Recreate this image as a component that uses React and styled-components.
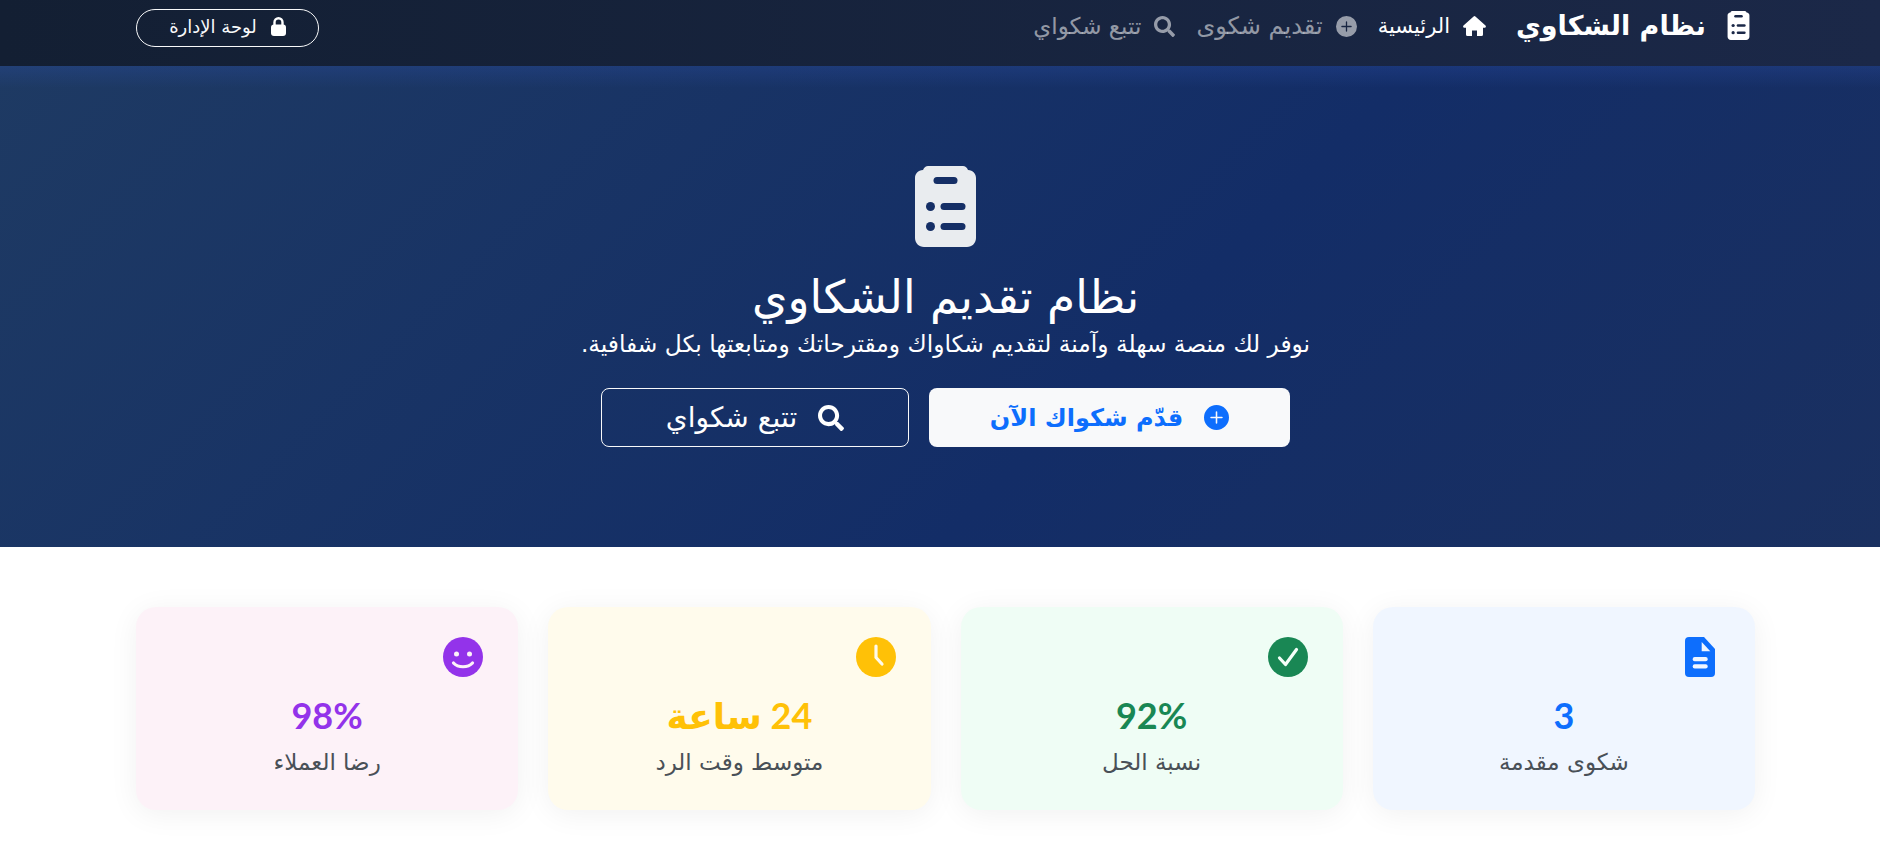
import React from "react";
import styled, { createGlobalStyle } from "styled-components";
import { FaSearch } from "react-icons/fa";
import { BsPlusCircleFill } from "react-icons/bs";

const GlobalStyle = createGlobalStyle`
  html, body { margin: 0; padding: 0; background: #fff; overflow: hidden; }
  body { font-family: "DejaVu Sans", sans-serif; }
`;

const Page = styled.div`
  direction: rtl;
  height: 853px;
  overflow: hidden;
  color: #212529;
`;

const Header = styled.header`
  height: 66px;
  box-sizing: border-box;
  padding: 9px 130px 19px 136px;
  display: flex;
  align-items: center;
  background: linear-gradient(90deg, #131f33, #1b2848);
`;

const Brand = styled.div`
  display: flex;
  align-items: center;
  gap: 21px;
  margin: 0 0 6px 30px;
  color: #fff;
  font-weight: 700;
  font-size: 27px;
`;

const Nav = styled.nav`
  display: flex;
  align-items: center;
  flex: 1;
  gap: 21px;
  margin-bottom: 4px;
`;

const NavLink = styled.a`
  display: flex;
  align-items: center;
  gap: 13px;
  font-size: ${(p) => p.$size}px;
  color: ${(p) => (p.$active ? "#fff" : "rgba(255,255,255,.55)")};
`;

const AdminButton = styled.a`
  display: flex;
  align-items: center;
  justify-content: center;
  gap: 14px;
  width: 183px;
  height: 38px;
  box-sizing: border-box;
  padding-bottom: 4px;
  border: 1px solid #f8f9fa;
  border-radius: 19px;
  font-size: 18px;
  color: #f8f9fa;
`;

const Hero = styled.section`
  height: 481px;
  box-sizing: border-box;
  padding: 100px 0 0 11px;
  display: flex;
  flex-direction: column;
  align-items: center;
  color: #fff;
  background:
    linear-gradient(180deg, rgba(45, 80, 170, 0.28), rgba(45, 80, 170, 0) 22px),
    linear-gradient(135deg, #1e3a63 0%, #132d67 60%, #1a3060 100%);
`;

const Title = styled.h1`
  margin: 26px 0 0;
  font-size: 45.5px;
  line-height: 50px;
  font-weight: 500;
`;

const Lead = styled.p`
  margin: 6px 0 29px;
  font-size: 23.3px;
  line-height: 30px;
`;

const Actions = styled.div`
  display: flex;
  gap: 20px;
`;

const HeroButton = styled.a`
  display: flex;
  align-items: center;
  justify-content: center;
  gap: 21px;
  height: 59px;
  width: ${(p) => (p.$solid ? "361px" : "308px")};
  box-sizing: border-box;
  border-radius: 8px;
  font-size: ${(p) => (p.$solid ? "24px" : "28px")};
  font-weight: ${(p) => (p.$solid ? 700 : 400)};
  color: ${(p) => (p.$solid ? "#0d6efd" : "#fff")};
  background: ${(p) => (p.$solid ? "#f8f9fa" : "transparent")};
  border: ${(p) => (p.$solid ? "none" : "1px solid #f8f9fa")};
`;

const Stats = styled.section`
  display: grid;
  grid-template-columns: repeat(4, 1fr);
  gap: 30px;
  padding: 60px 125px 0 136px;
`;

const Card = styled.div`
  height: 203px;
  box-sizing: border-box;
  padding: 30px 30px 0;
  border-radius: 20px;
  text-align: center;
  background: ${(p) => p.$bg};
  box-shadow: 0 4px 30px rgba(0, 0, 0, 0.06);
`;

const CardIcon = styled.div`
  width: 50px;
  height: 40px;
  display: flex;
  justify-content: center;
  color: ${(p) => p.$color};
`;

const Value = styled.div`
  margin-top: 16px;
  font-family: Lato, "DejaVu Sans", sans-serif;
  font-size: 36px;
  line-height: 44px;
  font-weight: 700;
  color: ${(p) => p.$color};
`;

const Label = styled.div`
  margin-top: 10px;
  font-size: 23px;
  line-height: 30px;
  color: #495057;
`;

// hand drawn, the icon packs don't have this clipboard
const Clipboard = ({ width, height, fill, hole }) => (
  <svg width={width} height={height} viewBox="0 0 61 81">
    <path
      fill={fill}
      d="M13 0H48C50 0 52 1.5 53 4C58 4 61 8 61 12V72C61 77 57 81 52 81H9C4 81 0 77 0 72V12C0 8 3 4 8 4C9 1.5 11 0 13 0Z"
    />
    <rect x="18.5" y="11" width="24" height="7" rx="3.5" fill={hole} />
    <circle cx="15.5" cy="40.5" r="4.5" fill={hole} />
    <rect x="25.5" y="37" width="25" height="7" rx="3.5" fill={hole} />
    <circle cx="15.5" cy="60.5" r="4.5" fill={hole} />
    <rect x="25.5" y="57" width="25" height="7" rx="3.5" fill={hole} />
  </svg>
);

const HomeIcon = () => (
  <svg width="23" height="20" viewBox="0 0 23 20" fill="#fff">
    <path d="M10.6.4a1.4 1.4 0 0 1 1.8 0L22.5 9.6c.8.8.3 2.2-.8 2.2H20v6.7a1.5 1.5 0 0 1-1.5 1.5H14v-5.5H9V20H4.5A1.5 1.5 0 0 1 3 18.5v-6.7H1.3C.2 11.800-.3 10.400.5 9.600Z" />
  </svg>
);

const LockIcon = () => (
  <svg width="15" height="19" viewBox="0 0 15 19" fill="#fff">
    <rect x="0" y="7.500" width="15" height="11.500" rx="3" />
    <path d="M3.500 8V5.200a4 4 0 0 1 8 0V8" fill="none" stroke="#fff" strokeWidth="2.400" />
  </svg>
);

const FileIcon = ({ bg }) => (
  <svg width="30" height="40" viewBox="0 0 30 40" fill="currentColor">
    <path d="M4 0H19L30 12V36a4 4 0 0 1-4 4H4a4 4 0 0 1-4-4V4a4 4 0 0 1 4-4Z" />
    <path d="M16.700 5L25.300 14.300H16.700Z" fill={bg} />
    <rect x="7.700" y="20" width="15" height="4.300" rx="2" fill={bg} />
    <rect x="7.700" y="27.300" width="15" height="4.300" rx="2" fill={bg} />
  </svg>
);

const CheckIcon = () => (
  <svg width="40" height="40" viewBox="0 0 40 40">
    <circle cx="20" cy="20" r="20" fill="currentColor" />
    <path d="M11.500 21L17.500 27.500L28.500 12.500" fill="none" stroke="#f4fff9" strokeWidth="3.200" strokeLinecap="round" strokeLinejoin="round" />
  </svg>
);

const ClockIcon = () => (
  <svg width="40" height="40" viewBox="0 0 40 40">
    <circle cx="20" cy="20" r="20" fill="currentColor" />
    <path d="M20 9V20.500L26 27" fill="none" stroke="#fffbec" strokeWidth="3.200" strokeLinecap="round" strokeLinejoin="round" />
  </svg>
);

const SmileIcon = () => (
  <svg width="40" height="40" viewBox="0 0 40 40">
    <circle cx="20" cy="20" r="20" fill="currentColor" />
    <circle cx="13.500" cy="17" r="2.500" fill="#fdf2f8" />
    <circle cx="26.500" cy="17" r="2.500" fill="#fdf2f8" />
    <path d="M10.500 26C15 31 25 31 29.500 26" fill="none" stroke="#fdf2f8" strokeWidth="3.200" strokeLinecap="round" />
  </svg>
);

const cards = [
  { bg: "#f0f6ff", color: "#0d6efd", icon: <FileIcon bg="#f0f6ff" />, value: "3", label: "شكوى مقدمة" },
  { bg: "#effdf5", color: "#198754", icon: <CheckIcon />, value: "92%", label: "نسبة الحل" },
  { bg: "#fffbec", color: "#ffc107", icon: <ClockIcon />, value: "24 ساعة", label: "متوسط وقت الرد" },
  { bg: "#fdf2f8", color: "#9333ea", icon: <SmileIcon />, value: "98%", label: "رضا العملاء" },
];

export default function App() {
  return (
    <Page>
      <GlobalStyle />
      <Header>
        <Brand>
          <Clipboard width={23} height={29} fill="#fff" hole="#1b2848" />
          نظام الشكاوي
        </Brand>
        <Nav>
          <NavLink $active $size={21}><HomeIcon />الرئيسية</NavLink>
          <NavLink $size={24}><BsPlusCircleFill size={21} />تقديم شكوى</NavLink>
          <NavLink $size={23}><FaSearch size={21} />تتبع شكواي</NavLink>
        </Nav>
        <AdminButton><LockIcon />لوحة الإدارة</AdminButton>
      </Header>
      <Hero>
        <Clipboard width={61} height={81} fill="#e9ecef" hole="#152f66" />
        <Title>نظام تقديم الشكاوي</Title>
        <Lead>نوفر لك منصة سهلة وآمنة لتقديم شكاواك ومقترحاتك ومتابعتها بكل شفافية.</Lead>
        <Actions>
          <HeroButton $solid><BsPlusCircleFill size={25} />قدّم شكواك الآن</HeroButton>
          <HeroButton><FaSearch size={26} />تتبع شكواي</HeroButton>
        </Actions>
      </Hero>
      <Stats>
        {cards.map((c) => (
          <Card key={c.label} $bg={c.bg}>
            <CardIcon $color={c.color}>{c.icon}</CardIcon>
            <Value $color={c.color}>{c.value}</Value>
            <Label>{c.label}</Label>
          </Card>
        ))}
      </Stats>
    </Page>
  );
}
